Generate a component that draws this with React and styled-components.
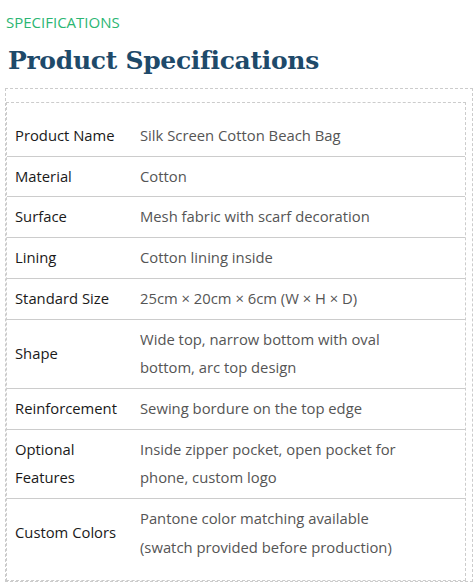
import React from "react";
import styled, { createGlobalStyle } from "styled-components";

const specs = [
  ["Product Name", "Silk Screen Cotton Beach Bag"],
  ["Material", "Cotton"],
  ["Surface", "Mesh fabric with scarf decoration"],
  ["Lining", "Cotton lining inside"],
  ["Standard Size", "25cm × 20cm × 6cm (W × H × D)"],
  ["Shape", "Wide top, narrow bottom with oval bottom, arc top design"],
  ["Reinforcement", "Sewing bordure on the top edge"],
  ["Optional Features", "Inside zipper pocket, open pocket for phone, custom logo"],
  ["Custom Colors", "Pantone color matching available (swatch provided before production)"],
];

const App = () => {
  return (
    <>
      <GlobalStyle />
      <Page>
        <Eyebrow>SPECIFICATIONS</Eyebrow>
        <Heading>Product Specifications</Heading>
        <Frame>
          <TableBox>
            <Table>
              <tbody>
                {specs.map(([label, value], i) => (
                  <Row key={label} last={i === specs.length - 1}>
                    <Label>{label}</Label>
                    <Value>{value}</Value>
                  </Row>
                ))}
              </tbody>
            </Table>
          </TableBox>
        </Frame>
      </Page>
    </>
  );
};

export default App;

const GlobalStyle = createGlobalStyle`
  body {
    margin: 0;
    background: #fff;
    font-family: "Open Sans", "Noto Sans", sans-serif;
  }
`;

const Page = styled.div`
  padding: 12px 2px 0 5px;
  overflow: hidden;
  height: 588px;
  box-sizing: border-box;
`;

const Eyebrow = styled.div`
  color: #2bb673;
  font-size: 15px;
  line-height: 21px;
  padding-left: 1px;
`;

const Heading = styled.h2`
  margin: 10px 0 0 3px;
  font-family: "DejaVu Serif", Georgia, serif;
  font-weight: bold;
  font-size: 25px;
  line-height: 36px;
  color: #1e4a6a;
  letter-spacing: -0.3px;
`;

const Frame = styled.div`
  margin-top: 9px;
  border: 1px dashed #ccc;
  padding-top: 13px;
  padding-right: 6px;
`;

const TableBox = styled.div`
  border: 1px dashed #ccc;
  padding: 13px 0;
`;

const Table = styled.table`
  width: 100%;
  border-collapse: collapse;
  font-size: 14.8px;
`;

const Row = styled.tr`
  border-bottom: ${({ last }) => (last ? "none" : "1px solid #ccc")};
`;

const Label = styled.td`
  color: #1a1a1a;
  width: 109px;
  padding: 5px 8px 6px;
  line-height: 28.7px;
  vertical-align: middle;
`;

const Value = styled.td`
  color: #555;
  padding: 5px 50px 6px 8px;
  line-height: 28.7px;
  vertical-align: middle;
`;
